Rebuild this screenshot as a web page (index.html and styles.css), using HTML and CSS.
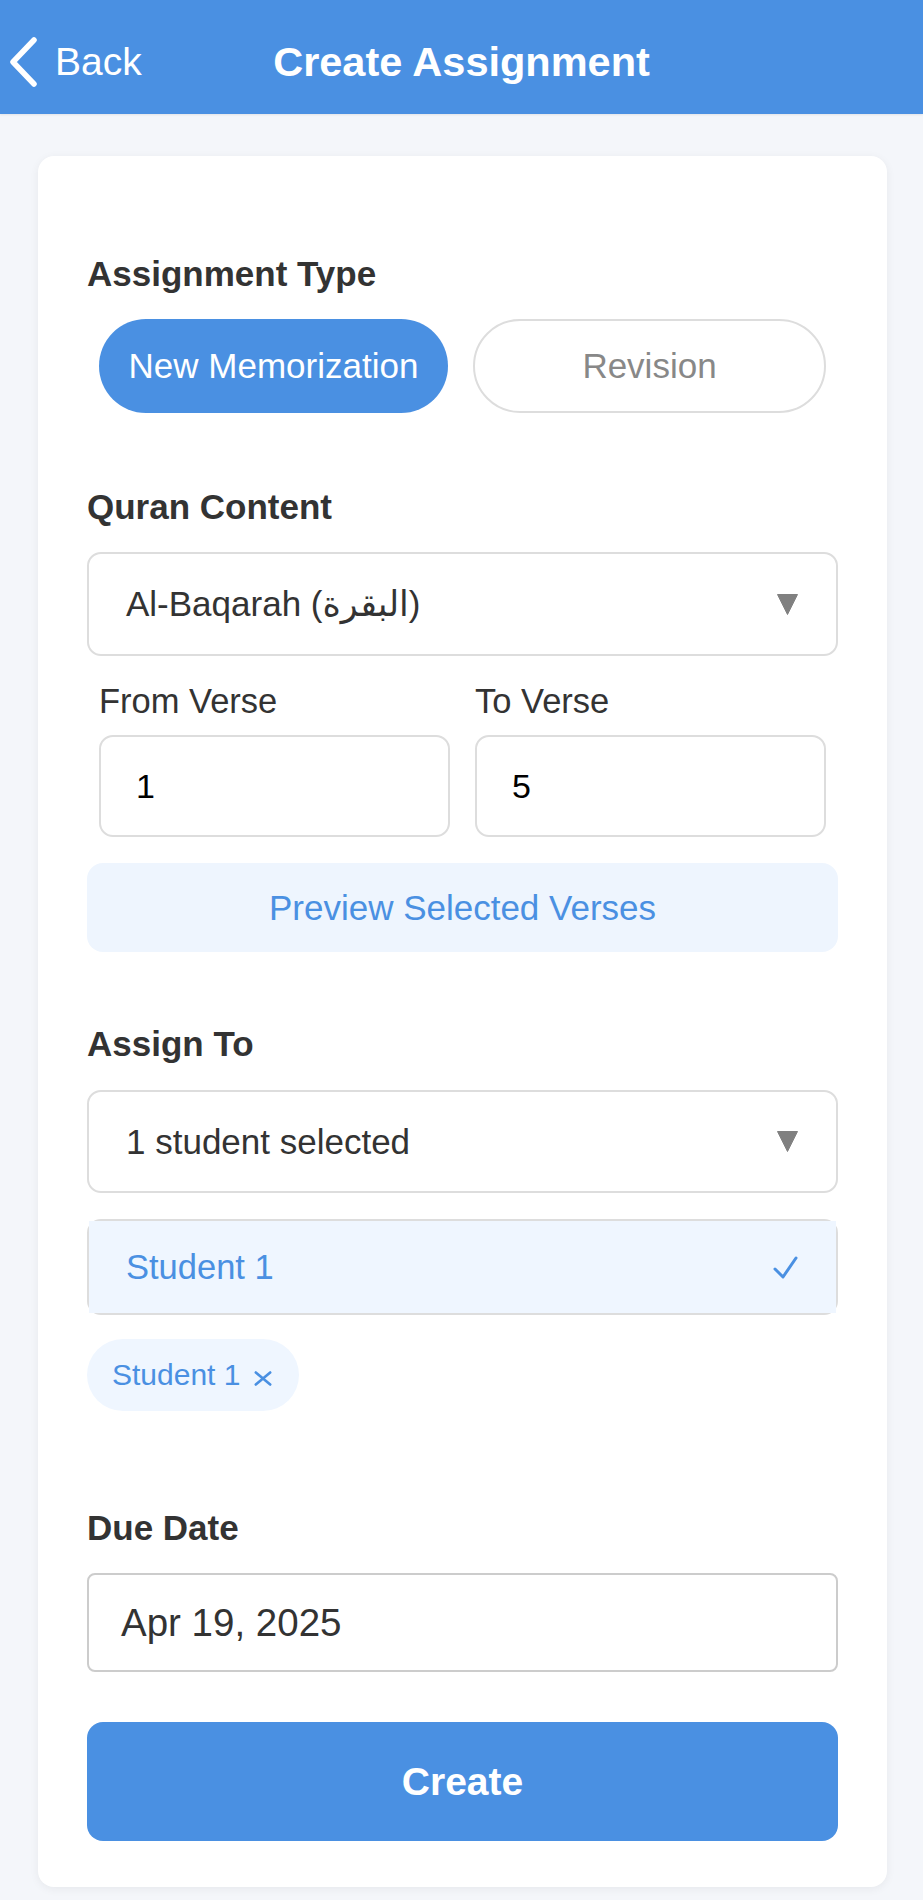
FILE: index.html
```html
<!DOCTYPE html>
<html lang="en">
<head>
<meta charset="utf-8">
<title>Create Assignment</title>
<link rel="stylesheet" href="styles.css">
</head>
<body>
<header class="topbar">
  <div class="back">
    <svg class="chev" viewBox="0 0 30 50" width="30" height="50" aria-hidden="true"><polyline points="26,3 5,25 26,47" fill="none" stroke="#fff" stroke-width="5.5" stroke-linecap="round" stroke-linejoin="round"/></svg>
    <span>Back</span>
  </div>
  <h1 class="title">Create Assignment</h1>
  <div class="spacer"></div>
</header>
<main class="page">
  <section class="card">
    <div class="section">
      <h2 class="label">Assignment Type</h2>
      <div class="seg">
        <div class="seg-btn active">New Memorization</div>
        <div class="seg-btn idle">Revision</div>
      </div>
    </div>

    <div class="section quran">
      <h2 class="label">Quran Content</h2>
      <div class="select">
        <span>Al-Baqarah (البقرة)</span>
        <svg class="caret" viewBox="0 0 21 21" width="21" height="21" aria-hidden="true"><polygon points="0.5,0.5 20.5,0.5 10.5,20.5" fill="#808080" stroke="#808080" stroke-width="1" stroke-linejoin="round"/></svg>
      </div>
      <div class="verse-row">
        <div class="verse">
          <div class="verse-label">From Verse</div>
          <div class="verse-input">1</div>
        </div>
        <div class="verse">
          <div class="verse-label">To Verse</div>
          <div class="verse-input">5</div>
        </div>
      </div>
      <div class="preview">Preview Selected Verses</div>
    </div>

    <div class="section assign">
      <h2 class="label">Assign To</h2>
      <div class="select select-2">
        <span>1 student selected</span>
        <svg class="caret" viewBox="0 0 21 21" width="21" height="21" aria-hidden="true"><polygon points="0.5,0.5 20.5,0.5 10.5,20.5" fill="#808080" stroke="#808080" stroke-width="1" stroke-linejoin="round"/></svg>
      </div>
      <div class="list">
        <div class="list-item">
          <span>Student 1</span>
          <svg class="check" viewBox="0 0 25 23" width="25" height="23" aria-hidden="true"><polyline points="2,13 10,21 23,2" fill="none" stroke="#4A90E2" stroke-width="3" stroke-linecap="round" stroke-linejoin="round"/></svg>
        </div>
      </div>
      <div class="chips">
        <div class="chip">
          <span>Student 1</span>
          <svg class="chip-x" viewBox="0 0 18 15" width="18" height="15" aria-hidden="true"><path d="M1.8 1.5 L16.2 13.5 M16.2 1.5 L1.8 13.5" fill="none" stroke="#4A90E2" stroke-width="2.6" stroke-linecap="round"/></svg>
        </div>
      </div>
    </div>

    <div class="section due">
      <h2 class="label">Due Date</h2>
      <div class="date-input">Apr 19, 2025</div>
    </div>

    <div class="create">Create</div>
  </section>
</main>
</body>
</html>
```

FILE: styles.css
```css
html, body {
  margin: 0;
  padding: 0;
}

body {
  background: #F4F6FA;
  font-family: "Liberation Sans", "DejaVu Sans", Arial, sans-serif;
  color: #333333;
  width: 923px;
}

/* Header */
.topbar {
  height: 114px;
  box-sizing: border-box;
  padding-top: 10px;
  background: #4A90E2;
  color: #ffffff;
  display: grid;
  grid-template-columns: 1fr auto 1fr;
  align-items: center;
  box-shadow: 0 1px 2px rgba(0, 0, 0, 0.08);
}

.back {
  display: flex;
  align-items: center;
  gap: 17px;
  padding-left: 8px;
  font-size: 39px;
  line-height: 50px;
}

.chev {
  display: block;
}

.title {
  margin: 0;
  font-size: 41.5px;
  font-weight: 700;
  line-height: 50px;
  white-space: nowrap;
}

/* Page */
.page {
  padding: 42px 36px 13px 38px;
}

.card {
  background: #ffffff;
  border-radius: 16px;
  padding: 98px 49px 46px;
  box-shadow: 0 2px 10px rgba(0, 0, 0, 0.06);
}

.label {
  margin: 0;
  font-size: 35px;
  line-height: 40px;
  font-weight: 700;
  color: #333333;
}

/* Segmented type selector */
.seg {
  display: flex;
  gap: 25px;
  padding: 0 12px;
  margin-top: 25px;
}

.seg-btn {
  flex: 1;
  height: 94px;
  box-sizing: border-box;
  border-radius: 47px;
  display: flex;
  align-items: center;
  justify-content: center;
  font-size: 35px;
}

.seg-btn.active {
  background: #4A90E2;
  color: #ffffff;
}

.seg-btn.idle {
  background: #ffffff;
  border: 2px solid #DDDDDD;
  color: #888888;
}

/* Sections */
.quran {
  margin-top: 74px;
}

.assign {
  margin-top: 72px;
}

.due {
  margin-top: 97px;
}

.select {
  margin-top: 25px;
  height: 104px;
  box-sizing: border-box;
  border: 2px solid #DDDDDD;
  border-radius: 14px;
  padding: 0 38px 0 37px;
  display: flex;
  align-items: center;
  justify-content: space-between;
  font-size: 35px;
  color: #333333;
}

.select-2 {
  margin-top: 26px;
  height: 103px;
}

.caret {
  display: block;
}

.verse-row {
  display: flex;
  gap: 25px;
  padding: 0 12px;
  margin-top: 25px;
}

.verse {
  flex: 1;
}

.verse-label {
  font-size: 34.5px;
  line-height: 40px;
  color: #333333;
}

.verse-input {
  margin-top: 14px;
  height: 102px;
  box-sizing: border-box;
  border: 2px solid #DDDDDD;
  border-radius: 14px;
  padding-left: 35px;
  display: flex;
  align-items: center;
  font-size: 34px;
  color: #000000;
}

.preview {
  margin-top: 26px;
  height: 89px;
  border-radius: 16px;
  background: #EEF5FE;
  color: #4A90E2;
  font-size: 35px;
  display: flex;
  align-items: center;
  justify-content: center;
}

/* Student list */
.list {
  margin-top: 26px;
  border: 2px solid #DDDDDD;
  border-radius: 14px;
}

.list-item {
  height: 92px;
  background: #EFF6FF;
  display: flex;
  align-items: center;
  justify-content: space-between;
  padding: 0 38px 0 37px;
  font-size: 34.5px;
  color: #4A90E2;
}

.check {
  display: block;
}

.chips {
  margin-top: 24px;
  display: flex;
}

.chip {
  height: 72px;
  box-sizing: border-box;
  border-radius: 36px;
  background: #EFF6FF;
  color: #4A90E2;
  font-size: 30px;
  padding: 0 27px 0 25px;
  display: flex;
  align-items: center;
  gap: 14px;
}

.chip-x {
  display: block;
  margin-top: 6px;
}

/* Date */
.date-input {
  margin-top: 25px;
  height: 99px;
  box-sizing: border-box;
  border: 2px solid #CCCCCC;
  border-radius: 8px;
  padding-left: 32px;
  display: flex;
  align-items: center;
  font-size: 38.5px;
  color: #333333;
}

/* Create button */
.create {
  margin-top: 50px;
  height: 119px;
  border-radius: 16px;
  background: #4A90E2;
  color: #ffffff;
  font-size: 39px;
  font-weight: 700;
  display: flex;
  align-items: center;
  justify-content: center;
}
```
